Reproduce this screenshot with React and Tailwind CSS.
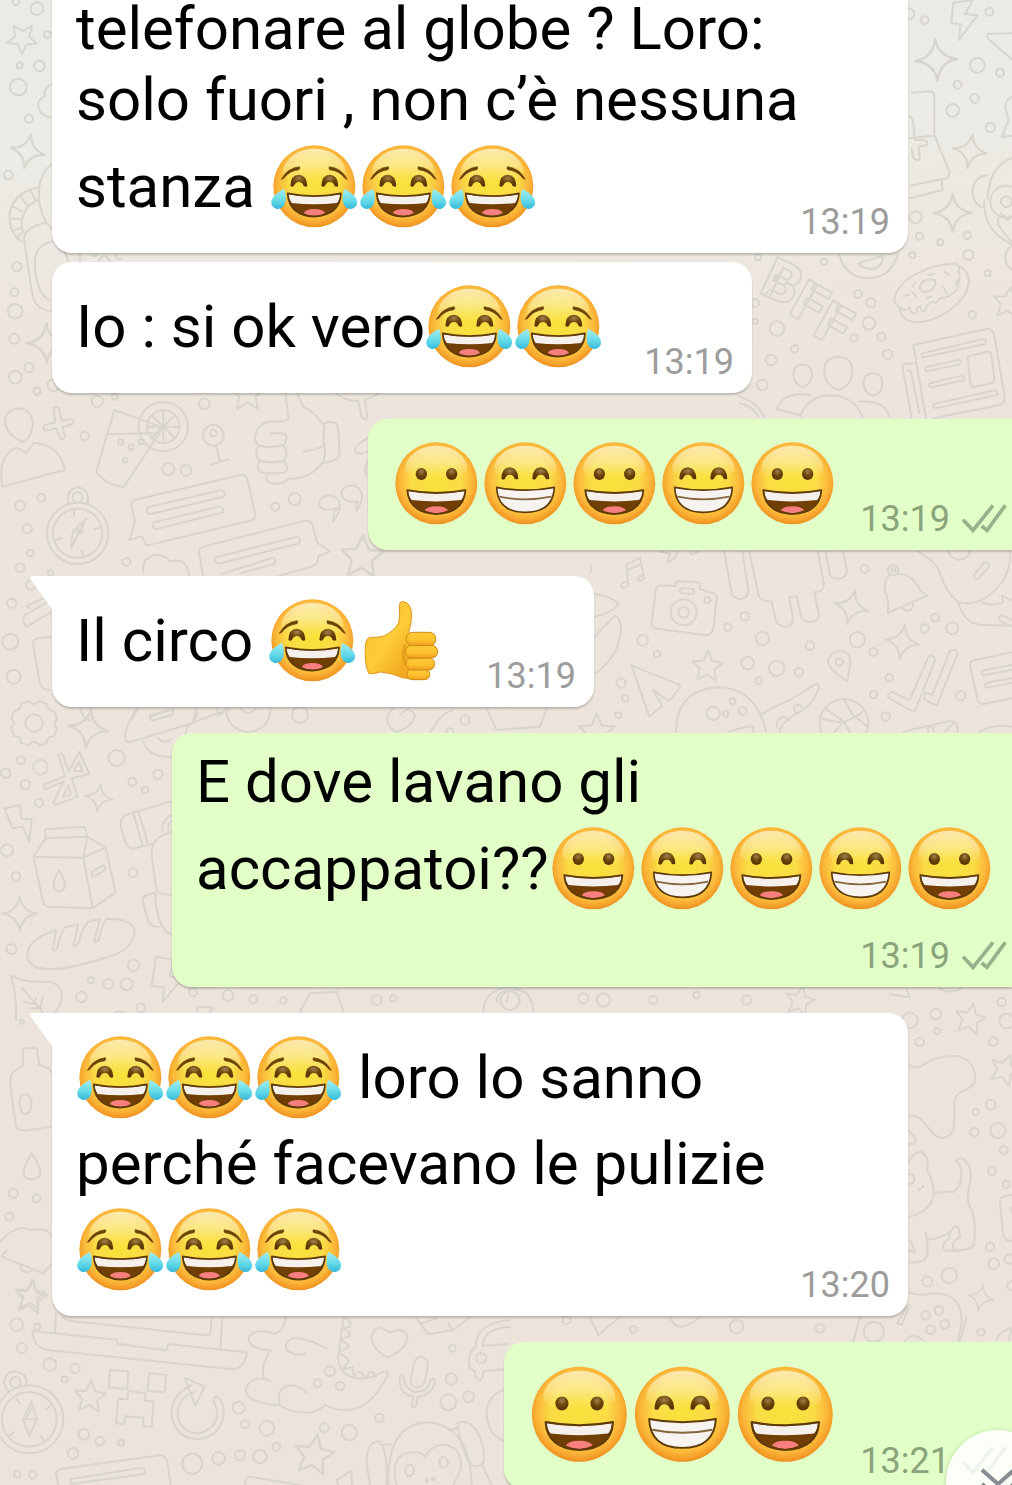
import { clsx } from "clsx";

// Every scene is drawn on a 3x grid with its own origin on the wallpaper.
// dots: [cx, cy, r], sparks and stars: [cx, cy, scale, rotation]
const SCENES = [
  {
    x: 0,
    y: 0,
    dots: [
      [48, 4, 11], [111, 26, 19], [142, 104, 10], [59, 196, 9], [118, 198, 16], [55, 261, 25], [87, 356, 12],
      [25, 525, 13], [51, 800, 14], [43, 877, 12], [46, 934, 22], [43, 1016, 15], [87, 1103, 14], [46, 1132, 19],
      [111, 1174, 11], [160, 1156, 18],
    ],
    sparks: [[83, 454, 1.05, 12], [140, 1030, 1.2, 0]],
    stars: [[68, 114, 0.92, 38]],
    paths: [
      "M156 253Q130 262 135 288Q108 300 116 325Q125 350 158 352",
      "M156 492Q105 530 120 620Q130 665 160 690",
      "M118 562Q40 575 28 645Q28 700 66 725M118 598Q60 620 65 690M92 571l15 32M60 588l23 29M35 618l32 16M28 656h36M36 695l30-15M51 715l20-24",
      "M140 668Q75 680 72 715L96 880Q105 930 158 934M158 724Q105 735 104 790Q108 890 158 905",
      "M195 757l10 26M240 760v24M275 765q8 8 16 0M296 785q16-34 34 0M345 765q8 20 20 10",
    ],
  },
  {
    x: 740,
    y: 0,
    dots: [
      [506, 42, 17], [554, 61, 12], [748, 35, 12], [712, 196, 22], [780, 218, 12], [653, 254, 12], [704, 295, 13],
      [638, 331, 19], [751, 382, 14], [527, 652, 18], [539, 709, 11], [601, 727, 9], [682, 706, 11], [517, 766, 9],
      [685, 765, 15], [743, 820, 9], [54, 772, 9], [252, 785, 10], [355, 882, 12], [393, 908, 14], [387, 970, 19],
      [424, 1010, 12], [342, 1014, 11], [443, 1063, 14], [164, 1047, 11], [111, 986, 22], [93, 1080, 16],
      [67, 1155, 16], [697, 944, 11], [46, 909, 12], [46, 964, 8], [799, 605, 16], [799, 605, 48],
    ],
    sparks: [[589, 180, 1.25, -3], [690, 453, 1.03, 9], [638, 639, 1.14, 0]],
    stars: [[806, 908, 0.95, 8]],
    paths: [
      "M640 8L698 0L675 42L712 46L657 120L662 72L634 70Z",
      "M816 100L745 101Q736 106 748 120L816 178",
      "M515 278L570 274Q583 275 583 290V405L628 515Q630 525 620 535L510 557M510 415L578 407M605 542L608 570L510 595M508 350q10 0 12 20l5 50l25 0q15 0 10 15l-25 5l5 35q-5 12-20 0l-5-30",
      "M816 290q-20 10-20 35l10 35l-20 50l30-3",
      "M816 473Q745 500 743 600M743 526Q700 530 698 575Q702 620 733 622M733 600Q730 680 790 718L816 735M775 655Q770 670 785 690L816 728M783 640l20 20l13-12M816 738q-20 10-20 35t20 35",
      "M298 764Q315 834 388 835Q450 833 474 764M355 790L428 767Q432 800 398 807Q368 808 355 790Z",
      "M462 905C470 830 580 790 650 791Q662 800 655 815Q665 830 650 870Q630 895 600 895Q588 915 580 905Q562 910 558 925Q550 945 543 925Q535 910 528 940Q515 945 508 922Q492 945 462 905ZM658 800C700 820 698 880 630 930C560 980 485 980 478 922M540 858q8-24 45-18q5 35-35 35q-12 0-10-17M518 860l8-14M565 826l18-5M613 815l15 10M655 838l-8 16M610 860l10 20M575 890l-14 4M530 890l-12-12M508 884l-16 4",
      "M520 1035L740 987Q758 985 763 1005L794 1190Q796 1210 780 1215L580 1255M520 1035L558 1255M520 1090L492 1092Q486 1096 489 1110L515 1255M503 1112Q512 1108 514 1120L538 1240",
      "M547 1060l185-43q10 5 4 15l-185 40q-10-4-4-12ZM558 1102l98-23q10 4 4 14l-98 21q-10-3-4-12ZM570 1150l98-23q8 4 4 14l-98 21q-10-3-4-12ZM582 1212l185-42q8 5 4 15l-185 40q-10-4-4-13ZM683 1070l60-15q10 0 12 12l8 70q0 10-10 13l-50 11q-10 0-12-12Z",
      "M188 1094q28 0 28 28t-28 40q-28-12-28-40t28-28ZM295 1071q42 0 42 42t-42 57q-42-15-42-57t42-42ZM399 1120q28 0 28 30t-28 37q-28-8-28-37t28-30Z",
      "M180 1250Q205 1186 275 1186Q345 1190 366 1250M180 1245L110 1228Q130 1172 212 1185M358 1205Q435 1200 448 1250",
      "M0 1190Q50 1205 72 1250M0 1210Q40 1220 55 1250",
    ],
  },
  {
    x: 0,
    y: 390,
    dots: [
      [111, 2, 10], [292, 34, 17], [344, 20, 9], [254, 138, 13], [613, 41, 16], [640, 136, 31], [640, 129, 10],
      [505, 237, 18], [558, 241, 16], [362, 156, 8], [393, 172, 8], [424, 155, 8], [375, 211, 7], [490, 110, 74],
      [490, 110, 49], [60, 347, 15], [124, 323, 12], [82, 416, 14], [91, 489, 10], [60, 533, 13], [233, 430, 92],
      [233, 430, 74], [233, 322, 15], [379, 516, 12], [826, 350, 12], [884, 327, 18], [152, 549, 8], [92, 585, 14],
      [35, 640, 14], [31, 755, 24], [41, 860, 21], [900, 975, 24],
    ],
    stars: [[742, 10, 1.05, 0], [1086, 500, 1.3, 3]],
    paths: [
      "M56 55Q98 58 98 105Q92 152 66 155Q14 130 15 90Q20 58 56 55ZM48 173L80 188L102 158Q180 165 194 240L8 290Q-10 200 48 173Z",
      "M160 55q12-10 17 0l8 37l30-5q10 8 2 16l-30 8l8 28q-8 15-16 4l-9-28l-33 7q-12-8-3-16l32-9Z",
      "M343 60L473 107L482 124L370 292Q320 285 288 247ZM325 133L480 129M490 110V61M490 110V159M490 110H441M490 110H539M490 110L455 75M490 110L525 145M490 110L455 145M490 110L525 75",
      "M648 167L660 215M635 223L685 208",
      "M855 0L866 85Q860 97 805 95Q765 105 765 150Q770 165 778 167Q765 178 771 205Q780 210 781 213Q768 230 780 245Q800 250 801 250Q795 275 815 280Q850 285 865 266Q930 270 970 215Q980 190 970 155L973 110Q950 70 910 50Q895 20 888 0M812 131Q848 125 860 138Q860 160 848 166Q862 175 859 195Q855 210 850 213Q865 225 860 243Q855 252 801 250M778 167Q815 175 848 166M781 213Q820 220 850 213M910 184Q950 180 968 168M973 100Q1005 90 1012 105Q1020 150 1018 195Q1012 215 973 218",
      "M403 330L725 254Q740 254 743 270L766 375Q765 388 755 391L440 467L426 440L388 450L405 395L395 350Q394 335 403 330ZM443 352L665 300Q680 308 671 320L449 373Q436 368 443 352ZM460 398L660 349Q676 356 667 368L467 418Q454 412 460 398Z",
      "M610 560L597 490Q595 475 610 470L915 392Q930 390 937 405L952 458L990 484L955 500Q955 520 940 528L830 560M648 502L892 440Q906 448 898 460L654 522Q641 516 648 502ZM665 552L820 503Q832 512 822 523L720 550",
      "M430 545Q425 500 470 495Q500 495 508 515Q560 500 567 555",
      "M206 345Q195 300 233 292Q272 298 262 343M222 362v16M300 412l-16 6M166 450l18-5M249 496l-4-16M258 387L213 474L218 425ZM218 425L250 424M232 415L240 430M240 400L250 415",
      "M1012 355Q955 370 958 335Q970 312 1000 318Q1040 340 1000 393Q998 370 1012 355M1075 335Q1025 340 1024 305Q1035 283 1065 287Q1105 310 1070 362Q1065 345 1075 335",
      "M75 675L155 630M90 655Q75 650 85 645L130 625M80 710Q65 700 72 680M80 710L155 665M155 740L110 745Q98 750 100 770L120 880Q125 900 150 900",
      "M1008 10Q1040 35 1075 32L1085 80Q1095 95 1102 82L1095 28Q1120 25 1140 5M1104 143Q1060 170 1065 185Q1080 198 1110 180M1110 205Q1090 230 1098 255",
      "M240 955Q250 990 270 990M395 990L415 955M450 975L520 958M590 955L580 990",
    ],
  },
  {
    x: 590,
    y: 545,
    dots: [
      [824, 71, 12], [910, 75, 16], [910, 75, 6], [464, 214, 13], [413, 247, 11], [352, 166, 9], [281, 202, 39],
      [281, 202, 16], [158, 286, 16], [201, 327, 10], [517, 280, 20], [660, 302, 13], [473, 354, 19], [560, 370, 23],
      [627, 382, 13], [506, 407, 10], [802, 284, 23], [850, 321, 12], [748, 351, 11], [1036, 218, 12], [1004, 250, 13],
      [1087, 250, 18], [898, 398, 11], [851, 449, 11], [887, 515, 13], [1112, 452, 14], [93, 414, 14], [106, 460, 10],
      [85, 511, 9], [428, 469, 9], [458, 498, 12], [407, 507, 8], [624, 491, 12], [762, 535, 73], [1108, 10, 34],
    ],
    sparks: [[784, 186, 1.05, 14], [937, 291, 1.05, 9]],
    stars: [[352, 364, 0.95, 3], [20, 560, 1.1, 0]],
    paths: [
      "M115 120L108 60L150 38L162 98M110 77L153 57M115 120Q105 135 93 124Q95 108 115 112M162 98Q155 112 143 103Q145 90 160 92",
      "M213 121L256 124L260 108L328 112L331 133L370 145Q382 150 380 160L370 250Q365 272 345 271L200 251Q185 248 185 235L197 135Q200 122 213 121ZM275 129L308 132Q318 140 308 148L275 145Q264 138 275 129Z",
      "M403 20L425 145Q432 162 450 162Q475 160 475 135L457 20M478 20L507 155Q515 170 545 170L558 230Q570 246 590 245Q612 240 608 215L598 157L620 153L635 220Q645 233 670 230Q690 222 686 205L673 142Q700 140 702 120L684 20M707 20L720 90Q730 103 750 101Q772 95 770 75L760 20",
      "M897 92Q880 110 885 140Q900 170 893 204L1012 152Q990 140 982 120Q955 80 920 88M935 188Q945 200 960 195Q972 190 968 172",
      "M985 20Q1040 50 1050 85Q1070 145 1105 172Q1180 190 1240 105Q1265 60 1260 20M1105 175Q1125 240 1180 240L1266 242M1152 90L1185 50Q1200 52 1196 66L1165 101Q1150 105 1152 90ZM1175 172Q1210 185 1240 172L1235 152L1266 165M1266 225L1235 210Q1220 215 1230 227L1266 245",
      "M772 408Q715 375 714 345Q725 315 755 318Q785 325 781 355ZM125 362L266 418Q275 425 264 436L237 468L188 434L217 482L178 515ZM258 560Q260 430 390 427Q500 432 528 560M512 510Q540 490 600 465L675 418Q690 415 686 430L670 465Q640 500 610 510Q570 540 570 560M560 545q0-30 25-28q10 3 12 8M415 560L480 543Q492 545 490 560",
      "M692 520Q740 535 762 530Q795 520 825 495M705 490L762 530L800 597M762 463L785 505L833 545M762 530L715 580",
      "M905 440L958 466L1017 333Q1035 330 1035 347L975 498Q970 503 895 458Q890 448 905 440ZM1005 442L1027 450L1080 317Q1100 310 1103 325L1042 478Q1035 482 1003 463Q1003 450 1005 442Z",
      "M1266 322L1145 347Q1138 355 1142 370L1163 465Q1170 480 1185 476L1266 460M1266 360L1180 376Q1170 385 1180 391L1266 374M1266 400L1190 413Q1180 422 1190 428L1266 414",
      "M940 560L1080 528Q1105 530 1103 560M1015 560Q1010 545 1025 543L1032 560M1065 560L1090 535M1170 560Q1210 535 1266 545",
      "M210 20L240 25Q235 45 232 52Q255 45 262 20M300 20Q300 35 325 20M0 60Q8 70 0 85M14 147Q55 150 85 175Q75 200 14 215M14 275L75 212Q92 215 93 255Q85 340 14 385",
    ],
  },
  {
    x: 0,
    y: 700,
    dots: [
      [102, 69, 26], [350, 174, 24], [62, 181, 12], [121, 202, 22], [17, 220, 14], [76, 254, 14], [117, 309, 12],
      [397, 245, 12], [474, 223, 14], [435, 270, 10], [21, 451, 18], [48, 529, 13], [399, 518, 13], [34, 747, 15],
      [401, 796, 17], [273, 841, 9], [325, 852, 15], [380, 853, 18], [244, 891, 16], [422, 923, 13], [579, 877, 12],
      [684, 886, 16], [745, 30, 66], [745, 15, 24],
    ],
    sparks: [[265, 85, 1.2, 8], [297, 293, 0.85, 8], [59, 641, 1.05, 0]],
    paths: [
      "M88 4Q102 20 118 3L140 12Q140 30 162 35L172 58Q155 68 171 85L162 110Q140 108 140 130L118 136Q102 115 86 136L62 128Q65 108 42 107L33 85Q50 70 34 55L42 33Q62 32 64 10Z",
      "M175 165Q185 155 190 168L206 215L238 155L268 222L215 235L233 290L167 315Q155 308 165 300L190 245L135 268Q125 258 138 252L195 228ZM237 185L222 212L247 215ZM205 255L188 292L213 284Z",
      "M410 25Q370 90 376 120Q380 130 395 125L560 75L680 30M588 25Q600 55 560 80M428 125Q450 175 515 170M560 78Q560 110 540 130M473 112Q490 135 513 118M452 50L515 28Q528 35 515 45L458 61Q445 60 452 50ZM650 25L655 45L690 28",
      "M13 326L60 315L64 356L95 358L88 425L68 380L38 385Z",
      "M135 388L255 380L262 410L317 443L345 570Q345 580 340 582L278 625L145 620Q130 618 128 600L100 470L137 415ZM137 415L262 410L250 473L100 470M250 473L317 443M250 473L278 625M177 512Q200 545 193 565Q180 582 163 567Q155 545 177 512ZM275 515L313 495L317 510L278 531Z",
      "M83 775Q75 735 130 705L168 690L158 750Q165 755 172 745Q185 690 195 682L235 673L220 738Q228 742 235 730Q250 675 265 665L300 657L282 725Q290 730 297 718Q308 665 320 657Q405 655 404 700Q395 755 310 775Q200 810 140 808Q95 805 83 775Z",
      "M518 303L375 345Q355 365 365 390L378 430Q385 448 405 445L455 432M400 340L428 438M415 335L445 435M518 395Q450 410 455 470L470 570Q475 585 518 584M518 345Q485 355 487 395M518 360Q502 370 505 392M462 578L440 585Q425 590 430 610L445 665Q455 682 480 680M465 578Q470 690 518 706",
      "M48 960Q50 880 33 828Q80 850 150 845Q195 860 184 900Q175 930 150 960M65 863L135 945M108 895L103 912M72 905L105 912M128 895L120 920M90 925L125 925",
      "M468 770L520 780M468 770L455 858L492 862L488 905L535 850M518 780L510 830L535 835M590 935L592 922L640 922L630 935M345 938Q360 930 372 938",
    ],
  },
  {
    x: 890,
    y: 980,
    dots: [
      [60, 121, 23], [137, 102, 16], [141, 153, 9], [89, 186, 13], [335, 66, 13], [350, 123, 22], [310, 185, 13],
      [302, 374, 15], [257, 396, 9], [253, 457, 13], [324, 452, 23], [341, 510, 12], [306, 574, 12], [349, 613, 11],
      [300, 801, 13], [311, 851, 16], [358, 837, 14], [366, 917, 14], [178, 886, 23], [112, 904, 15], [107, 1006, 13],
      [147, 991, 13], [164, 1033, 13], [122, 1049, 13], [273, 1057, 11], [58, 597, 15], [88, 628, 2], [98, 620, 2],
    ],
    sparks: [[272, 953, 0.78, 12]],
    stars: [[241, 116, 0.95, 12], [345, 268, 0.95, 20]],
    paths: [
      "M55 252Q80 275 105 250Q150 225 200 228Q255 240 256 295Q255 320 215 335Q192 345 192 375Q195 420 190 450Q175 480 145 472Q125 460 100 425Q80 405 55 407M55 452Q85 475 75 490L55 492",
      "M55 548Q65 520 93 515Q120 530 112 572Q130 600 131 640Q130 690 55 712M131 640Q160 633 190 636Q215 620 215 580Q215 555 198 543Q203 530 220 537Q250 560 240 610Q225 665 245 690Q258 720 253 790Q245 810 200 812Q180 800 195 782L210 770L205 745Q195 730 182 755L178 765Q180 775 170 782Q150 795 165 812L200 812M110 780Q160 775 182 752M107 758Q120 820 105 838Q90 850 55 847M60 780L75 815L55 812",
      "M366 645L345 648Q328 652 330 670L340 765Q345 785 366 782M366 680q-8 8 0 18",
      "M55 935Q80 950 130 940Q215 940 215 1020L205 1082M58 975L35 1035L22 1030L50 980M45 1082q25-30 55 0M358 1082q0-25 8-32M148 25Q180 45 215 25M0 43L58 52L50 25",
    ],
  },
  {
    x: 0,
    y: 980,
    dots: [
      [66, 125, 6], [760, 58, 12], [850, 62, 10], [1130, 60, 15], [1180, 55, 10], [1530, 62, 28], [1750, 55, 15],
      [1810, 60, 20], [1960, 60, 12], [2090, 45, 10], [2240, 60, 14], [40, 640, 14], [110, 655, 12], [28, 710, 12],
      [112, 1040, 9],
    ],
    stars: [[92, 952, 1, 10], [2400, 62, 0.9, 12]],
    paths: [
      "M70 205L68 260Q30 270 30 310L48 440Q55 455 90 450L156 440M70 205L110 203L118 255Q150 260 156 280M60 350Q90 330 95 370Q90 410 70 400Q55 390 60 350Z",
      "M95 520Q130 570 118 590Q95 605 72 590Q65 565 95 520ZM0 785Q50 730 90 750Q145 740 156 770M20 810L5 830L130 880L156 850M60 860Q70 885 95 873",
      "M1450 95Q1450 30 1530 20Q1600 30 1600 95M900 95L930 40L1010 35L1030 95",
    ],
  },
  {
    x: 0,
    y: 1300,
    dots: [
      [50, 74, 19], [65, 144, 15], [150, 194, 19], [225, 205, 14], [194, 238, 9], [46, 247, 16], [88, 358, 102],
      [88, 358, 82], [251, 403, 16], [299, 424, 13], [363, 428, 9], [219, 460, 16], [52, 523, 10], [98, 525, 11],
      [716, 323, 18], [734, 373, 12], [801, 385, 22], [829, 441, 12], [577, 491, 30], [656, 475, 19], [720, 466, 15],
      [780, 470, 20], [990, 214, 15], [953, 250, 12], [1021, 258, 13], [973, 383, 13], [1048, 398, 23], [1138, 354, 13],
      [1357, 145, 10], [1354, 237, 17], [1345, 307, 24], [1406, 290, 16], [1444, 175, 15], [1281, 541, 4], [1300, 537, 4],
      [2210, 80, 20], [2460, 85, 13], [1700, 60, 12], [1900, 88, 10], [2622, 95, 30],
    ],
    stars: [[270, 290, 0.98, 5], [942, 464, 1.22, 10], [92, -15, 0.9, 5]],
    paths: [
      "M97 93L350 119L355 132L500 151L505 132L740 157Q735 205 700 208L140 150Q100 140 97 93ZM168 40L165 95M185 50L205 62L620 106Q633 105 632 90L635 52M667 52L661 145",
      "M330 209L385 214L382 267L326 262ZM447 220L498 224L494 277L442 272ZM385 273L437 280L435 302L461 305L455 381L428 378L430 353L375 349L374 373L348 370L355 296L382 298Z",
      "M575 255Q510 285 515 350Q530 415 592 417Q665 410 671 340Q668 290 645 290Q635 298 650 325Q660 380 600 400Q545 400 533 350Q530 295 585 275M554 234L614 260L586 317Z",
      "M857 52Q850 95 825 102Q790 90 770 95Q740 105 748 125Q760 148 812 150Q780 200 792 235L812 244Q760 220 737 265Q735 310 840 316Q825 265 870 256Q905 258 920 278M840 316Q870 340 935 337Q965 328 976 315Q1010 335 1060 328Q1125 310 1165 220Q1160 210 1145 217Q1120 238 1070 235Q1015 225 1015 170L1030 52M980 147Q920 110 880 115Q850 125 860 150Q885 170 915 160",
      "M1030 52Q1060 65 1050 80L1026 85M1026 85Q1060 98 1045 110L1022 118M1022 120Q1055 135 1040 145L1018 155M1018 160Q1050 175 1044 188L1028 207M1028 207L1058 202L1062 230M1065 230Q1075 200 1095 232M1100 233Q1110 200 1128 230",
      "M1160 172Q1110 140 1116 105Q1130 65 1170 98Q1205 80 1222 105Q1225 150 1160 172ZM1242 190Q1250 165 1270 172Q1285 178 1284 195L1275 245Q1265 265 1245 262Q1230 255 1232 240ZM1202 225Q1190 280 1240 290L1235 317Q1242 328 1250 315L1253 290Q1300 285 1305 240Q1295 230 1290 245Q1285 275 1245 276Q1210 265 1212 230Q1208 220 1202 225Z",
      "M26 275Q0 245 22 222Q45 205 72 225Q85 240 76 260M94 305L110 358L88 410L69 358ZM69 358L110 358M94 305L69 358M98 320L80 350M50 297l8 12M150 317l-12 12M28 406l15-10M122 407l8 14",
      "M175 555L168 520Q170 508 185 506L480 466Q498 468 502 485L512 555M212 537L425 503Q440 508 432 522L212 552ZM735 555Q735 525 760 532L900 555M1010 540L1054 512L1056 555M1010 540L1015 555",
      "M1165 555Q1160 380 1275 367Q1410 370 1415 555M1190 555Q1165 460 1240 457Q1265 455 1275 470Q1300 430 1340 435Q1390 450 1382 510L1360 555M1160 555Q1165 460 1140 425Q1100 420 1100 490L1110 555M1150 435L1173 432M1415 495Q1385 460 1373 370Q1395 355 1425 385Q1460 440 1450 490Q1430 505 1415 495M1345 390L1370 385M1445 490L1475 555M1218 500Q1235 485 1243 510Q1240 530 1222 528Q1212 515 1218 500ZM1320 475Q1335 462 1345 487Q1342 505 1325 502Q1315 490 1320 475Z",
      "M1250 55L1285 103L1360 90L1410 52M1265 70L1310 55M1345 70L1358 90M1530 60Q1425 70 1428 140Q1400 160 1408 200L1425 215Q1428 240 1440 241Q1450 235 1450 213L1520 208M1448 138Q1450 85 1530 80M1448 138L1520 132M1512 270Q1460 285 1460 345Q1465 405 1512 423",
      "M1770 50L1795 105L1860 50M2010 50Q2030 110 2100 50M2580 50L2560 125M2900 50L2880 125M2990 120Q3000 90 3036 85",
    ],
  },
  {
    x: 380,
    y: 700,
    dots: [[255, 60, 14], [210, 95, 10], [1000, 40, 20]],
    paths: [
      "M40 25Q0 60 45 95Q90 90 105 45Q85 15 60 45M320 25L350 90L480 80L500 25M150 100Q180 40 220 30",
      "M350 905Q350 870 400 870Q450 870 450 905M380 905L385 885M420 905L415 885",
    ],
  },
];

const SPARK = "M0-50Q5-8 50 0Q8 5 0 50Q-5 8-50 0Q-8-5 0-50Z";
const STAR = "M0-50L14-17L48-14L23 9L30 44L0 26L-30 44L-23 9L-48-14L-14-17Z";

function Wallpaper() {
  return (
    <svg
      aria-hidden="true"
      viewBox="0 0 1012 1485"
      preserveAspectRatio="xMidYMin slice"
      className="absolute inset-0 h-full w-full"
    >
      <defs>
        <radialGradient id="face" cx=".5" cy=".46" r=".55">
          <stop offset="0" stopColor="#f9e23a" />
          <stop offset=".55" stopColor="#fadc45" />
          <stop offset=".8" stopColor="#fbb83a" />
          <stop offset=".94" stopColor="#f39a26" />
          <stop offset="1" stopColor="#e88c22" />
        </radialGradient>
        <linearGradient id="shine" x1="0" y1="0" x2="0" y2="1">
          <stop offset="0" stopColor="#fdf3cc" stopOpacity=".8" />
          <stop offset=".5" stopColor="#fbf0b0" stopOpacity=".6" />
          <stop offset="1" stopColor="#fbeb80" stopOpacity="0" />
        </linearGradient>
        <radialGradient id="eye" cx=".5" cy=".3" r=".6">
          <stop offset="0" stopColor="#a08050" />
          <stop offset=".6" stopColor="#6b4408" />
          <stop offset="1" stopColor="#5c3703" />
        </radialGradient>
        <linearGradient id="tear" x1="0" y1="0" x2="0" y2="1">
          <stop offset="0" stopColor="#a5eef0" />
          <stop offset=".6" stopColor="#62d9e8" />
          <stop offset="1" stopColor="#35b8dc" />
        </linearGradient>
        <linearGradient id="palm" x1="0" y1="0" x2="1" y2="1">
          <stop offset="0" stopColor="#f8b823" />
          <stop offset=".45" stopColor="#fdcd38" />
          <stop offset=".75" stopColor="#f3aa20" />
          <stop offset="1" stopColor="#f5b02a" />
        </linearGradient>
        <linearGradient id="finger" x1="0" y1="0" x2="0" y2="1">
          <stop offset="0" stopColor="#fdcc35" />
          <stop offset=".6" stopColor="#fcc02c" />
          <stop offset="1" stopColor="#ee9d1c" />
        </linearGradient>
      </defs>
      <g fill="none" stroke="#d8d5ce" strokeWidth="6" strokeLinejoin="round" strokeLinecap="round">
        {SCENES.map((scene) => (
          <g key={`${scene.x}-${scene.y}`} transform={`translate(${scene.x} ${scene.y}) scale(.3333)`}>
            {scene.dots.map(([cx, cy, r]) => (
              <circle key={`${cx}-${cy}-${r}`} cx={cx} cy={cy} r={r} />
            ))}
            {scene.sparks?.map(([x, y, s, a]) => (
              <path key={`${x}-${y}`} d={SPARK} transform={`translate(${x} ${y}) rotate(${a}) scale(${s})`} />
            ))}
            {scene.stars?.map(([x, y, s, a]) => (
              <path key={`${x}-${y}`} d={STAR} transform={`translate(${x} ${y}) rotate(${a}) scale(${s})`} />
            ))}
            {scene.paths.map((d) => (
              <path key={d} d={d} />
            ))}
          </g>
        ))}
        <g className="font-['Roboto',sans-serif] text-[56px] font-black" strokeWidth="2">
          <text transform="translate(758 292) rotate(25)">B</text>
          <text transform="translate(787 313) rotate(29)">F</text>
          <text transform="translate(811 334) rotate(29)">F</text>
        </g>
      </g>
    </svg>
  );
}

function Face() {
  return (
    <>
      <circle cx="163" cy="153" r="123" fill="url(#face)" />
      <path d="M163 40C225 40 262 85 256 118C225 150 100 150 70 118C64 85 101 40 163 40Z" fill="url(#shine)" />
    </>
  );
}

function OpenMouth({ wide }) {
  return (
    <g transform={wide ? "translate(163 201) scale(1.09 1.03) translate(-163 -201)" : undefined}>
      <path d="M83 174Q163 190 243 174Q240 240 163 244Q87 240 83 174Z" fill="#713f03" />
      <path d="M85 177Q163 192 241 177Q240 194 231 203Q163 211 95 203Q87 194 85 177Z" fill="#f5f0ec" />
      <path d="M131 233Q137 221 163 221Q189 221 195 233Q163 250 131 233Z" fill="#f77f80" />
      <path d="M83 174Q163 190 243 174Q240 240 163 244Q87 240 83 174Z" fill="none" stroke="#5e3a06" strokeWidth="5" strokeLinejoin="round" />
    </g>
  );
}

function SmilingEyes() {
  return (
    <g fill="url(#eye)">
      <path d="M91 152Q92 118 117 118Q141 120 142 152Q137 156 131 152Q127 140 117 140Q106 140 102 152Q96 157 91 152Z" />
      <path d="M184 152Q185 118 210 118Q234 120 235 152Q230 156 224 152Q220 140 210 140Q199 140 195 152Q189 157 184 152Z" />
    </g>
  );
}

const EMOJI = {
  joy: {
    label: "faccina con lacrime di gioia",
    art: (
      <>
        <Face />
        <SmilingEyes />
        <path d="M64 132Q82 98 118 94Q121 99 117 103Q88 106 70 130ZM262 132Q244 98 208 94Q205 99 209 103Q238 106 256 130Z" fill="#6b4205" stroke="#6b4205" strokeWidth="2" />
        <OpenMouth />
        <path d="M72 160Q81 180 75 204Q68 223 50 221Q32 216 34 197Q38 178 72 160Z" fill="url(#tear)" />
        <path d="M253 160Q244 180 250 204Q257 223 275 221Q293 216 291 197Q287 178 253 160Z" fill="url(#tear)" />
      </>
    ),
  },
  grin: {
    label: "faccina con gran sorriso",
    art: (
      <>
        <Face />
        <ellipse cx="118" cy="125" rx="17" ry="18" fill="url(#eye)" />
        <ellipse cx="209" cy="125" rx="17" ry="18" fill="url(#eye)" />
        <OpenMouth wide />
      </>
    ),
  },
  beam: {
    label: "faccina raggiante",
    art: (
      <>
        <Face />
        <g transform="translate(0 -13)">
          <SmilingEyes />
        </g>
        <path d="M77 165Q163 182 250 165Q246 240 163 240Q80 240 77 165Z" fill="#f6f3f0" stroke="#5e3a06" strokeWidth="5" strokeLinejoin="round" />
        <path d="M85 193Q163 209 241 193" fill="none" stroke="#86673d" strokeWidth="5" />
      </>
    ),
  },
  thumb: {
    label: "pollice in su",
    art: (
      <g transform="translate(-254 3)" strokeLinejoin="round">
        <path
          d="M325 141Q350 142 365 137Q395 122 409 98Q414 75 411 45Q412 33 423 34Q443 36 447 65Q450 90 439 126L485 266Q455 270 420 262Q390 248 355 245Q335 252 320 250Q306 225 309 170Q310 142 325 141Z"
          fill="url(#palm)"
          stroke="#dc981f"
          strokeWidth="3"
        />
        <g fill="url(#finger)" stroke="#d08a17" strokeWidth="3">
          <rect x="434" y="236" width="68" height="32" rx="15" />
          <rect x="431" y="203" width="86" height="36" rx="17" />
          <rect x="430" y="165" width="96" height="38" rx="18" />
          <rect x="432" y="126" width="88" height="40" rx="18" />
        </g>
        <path d="M427 168Q418 190 428 218" fill="none" stroke="#dd951b" strokeWidth="10" strokeLinecap="round" opacity=".6" />
      </g>
    ),
  },
};

function Emoji({ name, large }) {
  return (
    <svg
      role="img"
      aria-label={EMOJI[name].label}
      viewBox="30 20 267 267"
      className={clsx("shrink-0", large ? "size-[103px]" : "size-[89px]")}
    >
      {EMOJI[name].art}
    </svg>
  );
}

function Ticks() {
  return (
    <svg aria-label="consegnato" role="img" viewBox="0 0 135 90" className="ml-3 h-[30px] w-[45px]">
      <path d="M3 47L33 79L93 4M59 66L75 79L130 4" fill="none" stroke="#94b28b" strokeWidth="11" />
    </svg>
  );
}

const MESSAGES = [
  {
    lines: [
      { text: "telefonare al globe ? Loro:" },
      { text: "solo fuori , non c’è nessuna" },
      { text: "stanza ", emoji: ["joy", "joy", "joy"] },
    ],
    time: "13:19",
    box: "w-[856px] rounded-[20px] pb-8",
  },
  {
    lines: [{ text: "Io : si ok vero", emoji: ["joy", "joy"] }],
    time: "13:19",
    box: "mt-[9px] w-[700px] rounded-[20px] pb-8",
  },
  {
    own: true,
    lines: [{ emoji: ["grin", "beam", "grin", "beam", "grin"] }],
    time: "13:19",
    box: "mt-[26px] w-[644px] pb-8",
  },
  {
    tail: true,
    lines: [{ text: "Il circo ", emoji: ["joy", "thumb"] }],
    time: "13:19",
    box: "mt-[26px] w-[542px] rounded-[20px] rounded-tl-none pb-8",
  },
  {
    own: true,
    lines: [
      { text: "E dove lavano gli" },
      { text: "accappatoi??", emoji: ["grin", "beam", "grin", "beam", "grin"] },
    ],
    time: "13:19",
    box: "mt-[26px] w-[840px] pb-[84px]",
  },
  {
    tail: true,
    lines: [
      { emoji: ["joy", "joy", "joy"], after: " loro lo sanno" },
      { text: "perché facevano le pulizie", tall: true },
      { emoji: ["joy", "joy", "joy"] },
    ],
    time: "13:20",
    box: "mt-[26px] w-[856px] rounded-[20px] rounded-tl-none pb-8",
  },
  {
    own: true,
    large: true,
    lines: [{ emoji: ["grin", "beam", "grin"] }],
    time: "13:21",
    box: "mt-[26px] w-[508px] pb-8",
  },
];

function Line({ line, large }) {
  const tall = line.tall || line.emoji;
  return (
    <div className={clsx("flex items-center whitespace-pre", large ? "h-[102px] pt-4" : tall ? "h-[86px] pt-4" : "h-[71px]")}>
      {line.text && <span>{line.text}</span>}
      {line.emoji?.map((name, i) => (
        <Emoji key={i} name={name} large={large} />
      ))}
      {line.after && <span>{line.after}</span>}
    </div>
  );
}

function Message({ message }) {
  const { own, tail, large, lines, time, box } = message;
  return (
    <li
      className={clsx(
        "relative grid shrink-0 pt-[13px] pl-6 shadow-[0_2px_2px_rgba(0,0,0,0.2)]",
        own ? "self-end rounded-l-[20px] bg-[#e1ffc7]" : "ml-[52px] bg-white",
        box
      )}
    >
      {tail && (
        <svg aria-hidden="true" viewBox="0 0 23 34" className="absolute top-0 -left-[22px] h-[34px] w-[23px]">
          <path d="M23 0H2Q-1 1 1 4L22 33H23Z" fill="#fff" />
        </svg>
      )}
      <div className="col-start-1 row-start-1 text-[60px] leading-[71px] text-black">
        {lines.map((line, i) => (
          <Line key={i} line={line} large={large} />
        ))}
      </div>
      <div
        className={clsx(
          "col-start-1 row-start-1 flex items-center self-end justify-self-end text-[36px] leading-[44px]",
          own ? "pr-[5px] text-[#8aa37b]" : "pr-[18px] text-[#9c9c9c]",
          large ? "-mb-[26px]" : own && lines.length > 1 ? "-mb-[75px]" : "-mb-[23px]"
        )}
      >
        <time>{time}</time>
        {own && <Ticks />}
      </div>
    </li>
  );
}

export default function App() {
  return (
    <main className="relative h-screen overflow-hidden bg-[#ede5dc] bg-[linear-gradient(178deg,#e9ebe7_0,#ecebe6_130px,#ede5dc_370px,#ece3da_100%)] font-['Roboto',sans-serif]">
      <Wallpaper />
      <ol className="relative -mt-5 flex flex-col">
        {MESSAGES.map((message, i) => (
          <Message key={i} message={message} />
        ))}
      </ol>
      <button
        type="button"
        aria-label="Vai in fondo"
        className="absolute -right-[38px] -bottom-[49px] flex size-[104px] justify-center rounded-full bg-white/85 pt-[38px] shadow-[0_1px_5px_rgba(0,0,0,0.2)]"
      >
        <svg aria-hidden="true" viewBox="0 0 36 36" className="size-[36px]">
          <path d="M2 2L18 16L34 2M2 16L18 30L34 16" fill="none" stroke="#858d92" strokeWidth="4" />
        </svg>
      </button>
    </main>
  );
}
